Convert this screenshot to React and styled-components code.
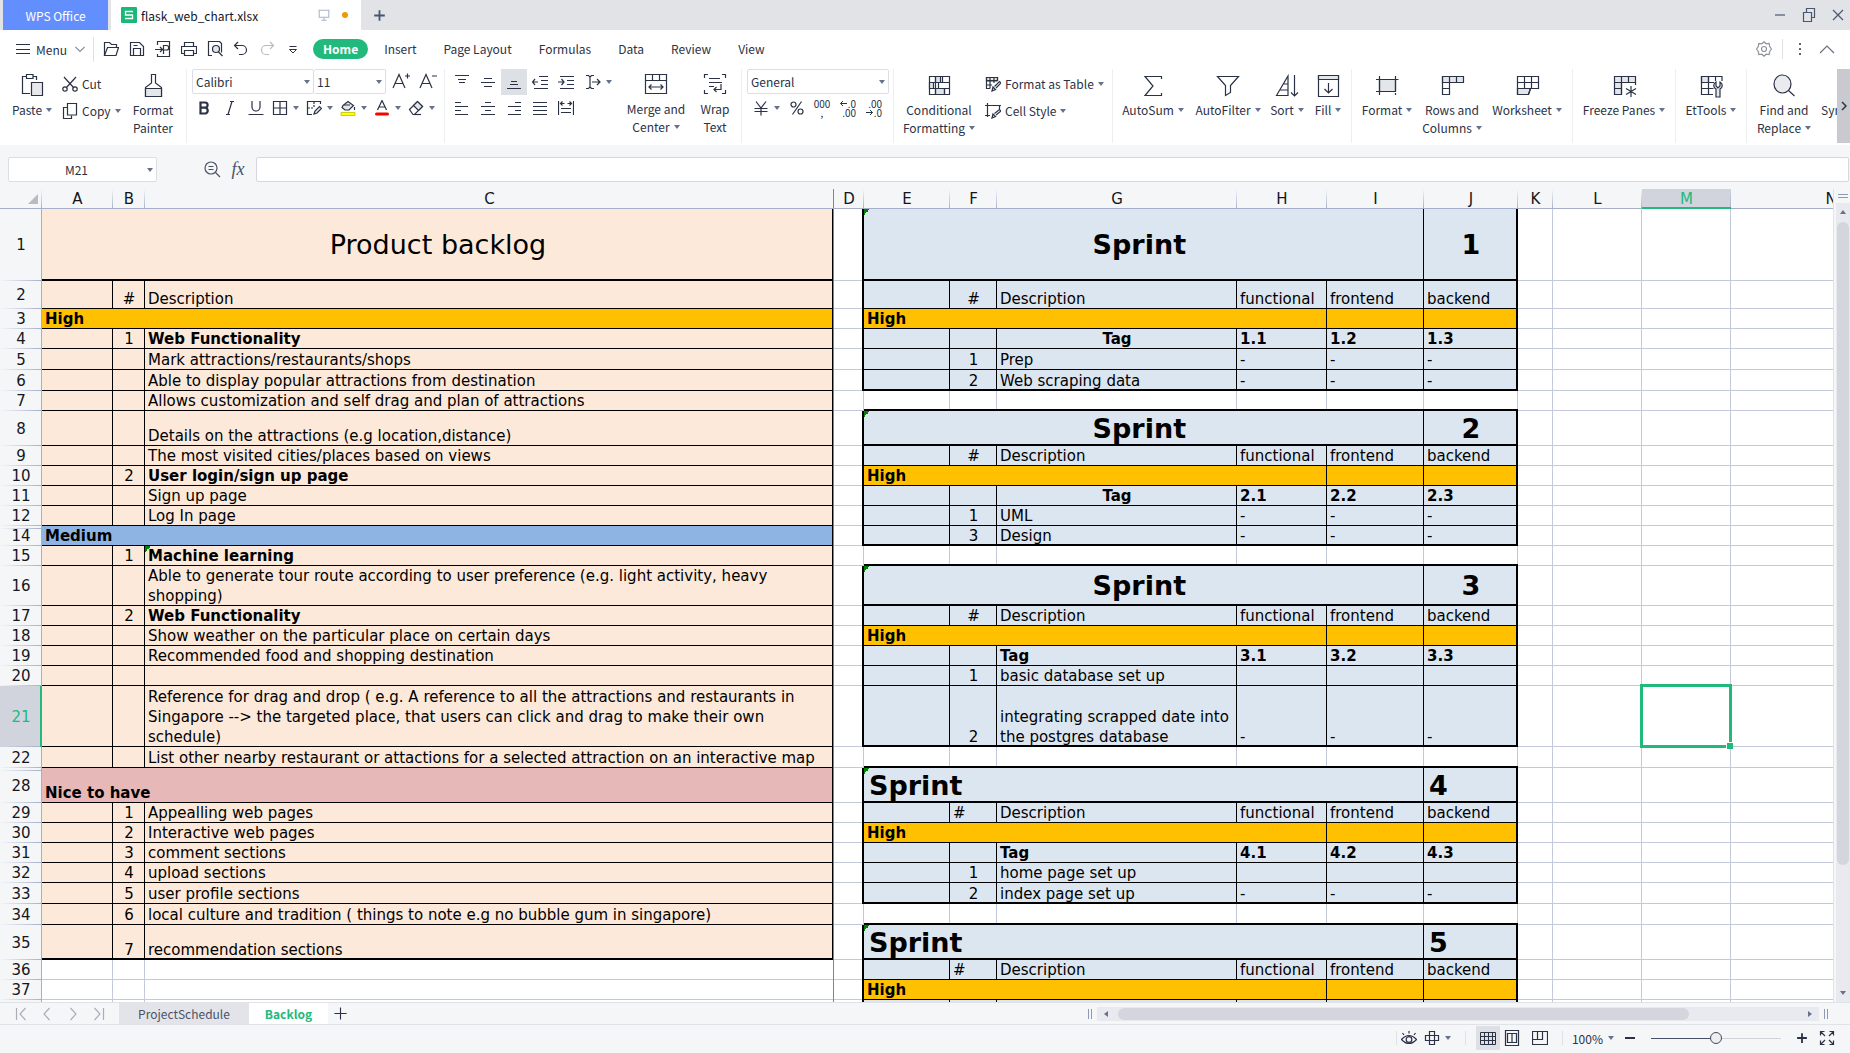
import React from 'react';
import styled, { createGlobalStyle, css } from 'styled-components';

const ui = '"Noto Sans CJK SC", "Noto Sans", sans-serif';
const sheet = '"DejaVu Sans", Verdana, sans-serif';
const ink = '#2b3245';
const green = '#21ba7c';
const gridLine = '#c3c9da';
const headLine = '#a5afc9';
const chrome = '#f5f6f8';
const peach = '#fce9da';
const ice = '#dce6f0';
const amber = '#ffc000';

const GlobalStyle = createGlobalStyle`
  * { box-sizing: border-box; }
  body { margin: 0; background: ${chrome}; font-family: ${ui}; font-size: 12px; color: ${ink}; }
  button, input, select { font: inherit; color: inherit; margin: 0; padding: 0; border: 0; background: none; }
  a { color: inherit; text-decoration: none; }
`;

const Shell = styled.div`
  display: flex;
  flex-direction: column;
  height: 100vh;
  overflow: hidden;
`;

/* ---------- drawing helpers ---------- */

const Svg = styled.svg`
  display: block;
  flex: none;
  fill: none;
  stroke: ${(p) => p.$color || ink};
  stroke-width: ${(p) => p.$weight || 1.2};
`;

const paths = {
  paste: <><path d="M6 3.500H2.500v17H10M16.500 7V3.500H13M6.500 1.500h6.500v4H6.500z" /><path d="M11.500 9.500h11v13h-11z" fill="#e6e8ec" /></>,
  brush: <><path d="M10.500 1.500h4v8.500l6 4.500v9H4.500v-9l6-4.500z" fill="#fff" /><path d="M4.500 15.500h16v8h-16z" fill="#e3e6ea" /></>,
  cut: <><path d="M2 1l10 11M14 1L4 12" /><circle cx="3" cy="13" r="2.200" /><circle cx="13" cy="13" r="2.200" /></>,
  copy: <><path d="M5.500 4.500h-4v11h8v-3" /><path d="M5.500.500h9v11.500h-9z" /></>,
  folder: <><path d="M1.500 14.500v-13h5l2 2h5v3" /><path d="M1.500 14.500l3-8h11l-2.500 8z" /></>,
  save: <><path d="M1.500 1.500h9l4 4v9h-13z" /><path d="M4.500 14.500v-7h7v7M4.500 4.500h4" /></>,
  export: <><path d="M2.500 4V.500h12v15h-12V13M0 8.500h7M5 6l2.500 2.500L5 11M8.500 13V4.500h3a2 2 0 010 4.500h-3" /></>,
  print: <><path d="M3.500 5.500v-4h9v4M3.500 12.500h-3v-7h15v7h-3" /><path d="M3.500 9.500h9v5h-9z" /></>,
  preview: <><path d="M5 14.500H1.500v-14h11l2 2v9" /><circle cx="9" cy="8" r="3.500" fill="#e3e6ea" /><path d="M11.500 11l4 4" /></>,
  undo: <path d="M5 1L1.500 4.500 5 8M1.500 4.500h7.500a4.500 4.500 0 010 9H6" />,
  redo: <path d="M11 1l3.500 3.500L11 8M14.500 4.500H7a4.500 4.500 0 000 9h3" />,
  more: <path d="M4.500 5.500h7M4.500 8.500h7L8 12z" strokeWidth="1" />,
  borders: <path d="M1.500 1.500h13v13h-13zM8 1.500v13M1.500 8h13" />,
  pen: <><path d="M14.500 4V1.500h-13v13H6" /><path d="M8 2v6M2 8h6" strokeDasharray="2 1" /><path d="M8 14l1-3 4.500-4.500 2 2L11 13z" fill="#e3e6ea" /></>,
  fill: <><path d="M3 5.500L8 1.500l5.500 4-4.500 4.500H5L2 7.500z" fill="#e3e6ea" /><path d="M4 5h6M14.500 7v3" /><path d="M1 12.500h14v3H1z" fill="#ffff00" stroke="#c2c200" strokeWidth=".800" /></>,
  fontColor: <><path d="M3.500 10L8 .500l4.500 9.500M5 7h6" /><path d="M2.500 14h11" stroke="#ff0000" strokeWidth="3" strokeLinecap="round" /></>,
  eraser: <><path d="M1.500 9.500l8-8 5 5-8 8H5z" /><path d="M5.500 5.500l5 5 4-4-5-5z" fill="#e3e6ea" /><path d="M6 14.500h7" /></>,
  underline: <path d="M4 1v6a4 4 0 008 0V1M.500 14.500h15" />,
  italic: <path d="M8 1.500h4M4 14.500h4M10 1.500l-4 13" />,
  bold: <path d="M4.500 2.500H9a2.600 2.600 0 010 5.200H4.500zM4.500 7.700h5a3 3 0 010 5.800h-5z" strokeWidth="2.200" />,
  growFont: <path d="M1 16L7 2.500 13 16M3.200 11.500h7.600M13 4h5M15.500 1.500v5" />,
  shrinkFont: <path d="M1 16L7 2.500 13 16M3.200 11.500h7.600M13 4h5" />,
  alignTop: <path d="M1 1.500h14M4 5.500h8M5 8.500h6" />,
  alignMid: <path d="M4 4.500h8M1 8.500h14M4 12.500h8" />,
  alignBottom: <path d="M5 7.500h6M4 10.500h8M1 14.500h14" />,
  outdent: <path d="M7 2.500h9M9 6.500h7M9 10.500h7M2 14.500h14M0 8h6M3 5L.500 8 3 11" />,
  indent: <path d="M2 2.500h14M9 6.500h7M9 10.500h7M2 14.500h14M0 8h6M3.500 5L6 8l-2.500 3" />,
  direction: <path d="M1 1.500h2.500L5 3v10l-1.500 1.500H1M9 1.500H6.500L5 3M9 14.500H6.500L5 13M7 8h8M12 5l3 3-3 3" />,
  alignLeft: <path d="M1 2.500h6M1 6.500h13M1 10.500h6M1 14.500h13" />,
  alignCenter: <path d="M5 2.500h6M1 6.500h14M5 10.500h6M1 14.500h14" />,
  alignRight: <path d="M9 2.500h6M2 6.500h13M9 10.500h6M2 14.500h13" />,
  justify: <path d="M1 2.500h14M1 6.500h14M1 10.500h14M1 14.500h14" />,
  distribute: <path d="M.500 1v14M15.500 1v14M3 3.500h3.500M9.500 3.500H13M4.500 1.500l-2 2 2 2M11.500 1.500l2 2-2 2M3 8.500h10M3 12.500h10" />,
  merge: <><path d="M1.500 2.500h21v19h-21zM1.500 8.500h21M8.500 2.500v6M15.500 2.500v6" /><path d="M4.500 15h15M7.500 12.500L5 15l2.500 2.500M16.500 12.500L19 15l-2.500 2.500" /></>,
  wrap: <><path d="M5 2.500H1.500V6M19 2.500h3.500V6M5 21.500H1.500V18M19 21.500h3.500V18" /><path d="M6 6.500h11M6 10.500h13M6 14.500h5M18 12v5.500h-7M13.500 15L11 17.500l2.500 2.500" /></>,
  yen: <path d="M3 1.500l5 6.500 5-6.500M1.500 8.500h13M1.500 11.500h13M8 8v7.500" />,
  percent: <><circle cx="4.500" cy="4.500" r="2.500" /><circle cx="11.500" cy="11.500" r="2.500" /><path d="M12.500 1.500l-9 13" /></>,
  conditional: <><path d="M2.500 3.500h20v18h-20z" /><path d="M8.500 3.500h5v6h-5zM2.500 15.500h4v-6h-4zM8.500 15.500h9v6h-9z" fill="#dfe2e7" /><path d="M2.500 9.500h20M2.500 15.500h20M8.500 3.500v18M15.500 3.500v6M17.500 15.500v6M11.500 9.500v6" /></>,
  tableFormat: <><path d="M1.500 1.500h11v3h-11z" fill="#e3e6ea" /><path d="M12.500 5V1.500h-11v11H5M1.500 5h11M1.500 9H7M5 1.500v11M9 1.500V7" /><path d="M7 15l1-4 2.500 2.500zM9.500 10.500l5-5 1.500 1.500-5 5" fill="#fff" /></>,
  cellStyle: <><path d="M0 2.500h16M2.500 0v14M0 12.500h5M14.500 2.500V6" /><path d="M7 15l1-4 2.500 2.500zM9.500 10.500l5-4 1.500 1.500-5 4" fill="#fff" /></>,
  sum: <path d="M20.500 6V3.500H4l8 9.500-8 9.500h16.500V20" />,
  filter: <path d="M1.500 3.500h21l-8 9v7l-5 3v-10z" />,
  sort: <path d="M1.500 22.500L13 3v19.500zM5 17h8M8.500 11H13M19.500 2v21M16 19.500l3.500 3.500 3.500-3.500" />,
  fillDown: <><path d="M2.500 2.500h20v21h-20z" /><path d="M2.500 2.500h20v4h-20z" fill="#e3e6ea" /><path d="M12.500 10v10M8.500 16l4 4 4-4" /></>,
  format: <><path d="M4.500 6.500h16v12h-16z" fill="#e3e6ea" /><path d="M4.500 3v19M20.500 3v15M1 6.500h22.500M1 18.500h16M20.500 20v2" /></>,
  rowsCols: <><path d="M2.500 3.500h21v6h-21z" fill="#e3e6ea" /><path d="M9.500 3.500v18h-7v-18M2.500 9.500h7M2.500 15.500h7M16.500 3.500v6" /></>,
  worksheet: <><path d="M2.500 15.500h13l-2 6h-11z" fill="#e3e6ea" /><path d="M2.500 3.500h21v12h-21zM2.500 9.500h21M9.500 3.500v12M16.500 3.500v12M2.500 15.500v6h11l2-6" /></>,
  freeze: <><path d="M2.500 3.500h21v6h-14v12h-7z" fill="#e3e6ea" /><path d="M9.500 3.500v18M16.500 3.500v6M2.500 9.500h21M2.500 15.500h7M23.500 9.500V12" /><path d="M19 13v11M14 15.500l10 6M24 15.500l-10 6" /></>,
  tools: <><path d="M2.500 3.500h7v6h-7z" fill="#e3e6ea" /><path d="M23 8V3.500H2.500v18H14M9.500 3.500v18M16.500 3.500V8M2.500 9.500H15M2.500 15.500h12" /><path d="M17 9v4l2 2 2-2V9c3 1.500 3 5.500 0 7v8h-4v-8c-3-1.500-3-5.500 0-7z" fill="#e3e6ea" /></>,
  find: <><ellipse cx="10.500" cy="11" rx="8.500" ry="9" fill="#e9ebee" /><path d="M16.500 17.500l6 5.500" /></>,
  magnifier: <><circle cx="7" cy="7" r="6" /><path d="M4.500 5.500h5M4.500 8.500h5M11.500 11.500l4.500 4.500" /></>,
  gear: <><path d="M8 .800l2.200 2 2.900-.300.600 3 1.800 2.500-1.800 2.500-.600 3-2.900-.300-2.200 2-2.200-2-2.900.300-.600-3L.500 8l1.800-2.500.600-3 2.900.300z" /><circle cx="8" cy="8" r="2.500" /></>,
  dots: <g fill="#5d6474" stroke="none"><path d="M7 2h2v2H7zM7 7h2v2H7zM7 12h2v2H7z" /></g>,
  chevronUp: <path d="M1 12l7-7 7 7" />,
  chevronDown: <path d="M3.500 6L8 10.500 12.500 6" />,
  burger: <path d="M1 3.500h14M1 8.500h14M1 12.500h14" />,
  minimize: <path d="M3 8h10" />,
  restore: <path d="M2.500 5.500h8v9h-8zM5.500 5V1.500h8v9H11" />,
  close: <path d="M3 3l10 10M13 3L3 13" />,
  monitor: <path d="M2.500 2.500h11v8h-11zM8 10.500v3M5 14h6" />,
  plus: <path d="M1.500 8h13M8 1.500v13" />,
  minus: <path d="M3 8h10" />,
  first: <path d="M3.500 2v12M12.500 2L7 8l5.500 6" />,
  prev: <path d="M10.500 2L5 8l5.500 6" />,
  next: <path d="M5.500 2L11 8l-5.500 6" />,
  last: <path d="M3.500 2L9 8l-5.500 6M12.500 2v12" />,
  eye: <><path d="M.500 9.500Q8 1.500 15.500 9.500 8 17.500.500 9.500z" /><circle cx="8" cy="9.500" r="2.800" /><path d="M8 3.500V1M3 5L1.500 3M13 5l1.500-2" /></>,
  cross: <path d="M5.500 1.500h5v13h-5zM1.500 5.500h13v5h-13z" />,
  gridView: <path d="M.500 2.500h15v12H.500zM.500 6.500h15M.500 10.500h15M4.500 2.500v12M8.500 2.500v12M12.500 2.500v12" />,
  pageView: <path d="M1.500.500h13v15h-13zM3.500 3.500h9v9h-9zM8 3.500v9" />,
  layoutView: <path d="M.500 1.500h15v13H.500zM.500 9.500h10v-8M5.500 1.500v8" />,
  full: <path d="M10 6l4.500-4.500M10.500 1.500h4v4M6 6L1.500 1.500M5.500 1.500h-4v4M10 10l4.500 4.500M10.500 14.500h4v-4M6 10l-4.500 4.500M5.500 14.500h-4v-4" />,
};

const Icon = ({ name, size = 16, box, color, weight }) => (
  <Svg width={size} height={size} viewBox={`0 0 ${box || size} ${box || size}`} $color={color} $weight={weight} aria-hidden="true">
    {paths[name]}
  </Svg>
);

const SmallSvg = styled.svg`
  display: inline-block;
  flex: none;
  fill: #66718c;
  vertical-align: middle;
`;
const Caret = () => (
  <SmallSvg width="6" height="4" viewBox="0 0 6 4" aria-hidden="true"><path d="M0 0h6L3 4z" /></SmallSvg>
);
const ArrowIcon = ({ d, w, h }) => (
  <SmallSvg width={w} height={h} viewBox={`0 0 ${w} ${h}`} aria-hidden="true"><path d={d} /></SmallSvg>
);

/* ---------- title bar ---------- */

const TitleBar = styled.header`
  display: flex;
  align-items: center;
  flex: none;
  height: 30px;
  padding-left: 3px;
  background: #e2e3e7;
`;
const OfficeTab = styled.button`
  width: 105px;
  height: 30px;
  background: #628ffd;
  color: #fff;
`;
const FileTab = styled.div`
  display: flex;
  align-items: center;
  width: 250px;
  height: 30px;
  margin: 0 10px 0 3px;
  padding: 0 13px 0 10px;
  gap: 4px;
  background: #fff;
  color: #14161c;
`;
const FileMark = styled.span`
  display: grid;
  place-items: center;
  width: 16px;
  height: 16px;
  border-radius: 1px;
  background: #19b879;
`;
const FileName = styled.span`
  flex: 1;
`;
const Unsaved = styled.span`
  width: 6px;
  height: 6px;
  margin-left: 7px;
  border-radius: 50%;
  background: #ec9a00;
`;
const IconButton = styled.button`
  display: inline-flex;
  align-items: center;
  justify-content: center;
  flex: none;
  gap: ${(p) => p.$gap || 0}px;
  width: ${(p) => p.$w || 26}px;
  height: ${(p) => p.$h || 26}px;
  background: ${(p) => (p.$on ? '#dde1e6' : 'transparent')};
`;
const Push = styled.span`
  flex: 1;
`;
const WindowButtons = styled.div`
  display: flex;
  gap: 5px;
`;

/* ---------- menu bar ---------- */

const MenuBar = styled.nav`
  display: flex;
  align-items: center;
  flex: none;
  height: 39px;
  padding: 0 6px 1px 15px;
  background: #fff;
`;
const MenuButton = styled.button`
  display: flex;
  align-items: center;
  gap: 5px;
  width: 78px;
  height: 26px;
  white-space: nowrap;
`;
const Divider = styled.span`
  flex: none;
  width: 1px;
  height: ${(p) => p.$h || 20}px;
  margin: 0 ${(p) => p.$m || 0}px;
  background: #dfe1e6;
`;
const QuickTools = styled.div`
  display: flex;
  margin: 0 7px 0 4px;
`;
const Tabs = styled.div`
  display: flex;
  align-items: center;
  gap: 5px;
`;
const TabLink = styled.a`
  padding: 0 ${(p) => (p.$on ? 10 : 11)}px;
  border-radius: 10px;
  line-height: 20px;
  background: ${(p) => (p.$on ? green : 'transparent')};
  color: ${(p) => (p.$on ? '#fff' : ink)};
  font-weight: ${(p) => (p.$on ? 700 : 400)};
`;

/* ---------- ribbon ---------- */

const Ribbon = styled.div`
  display: flex;
  flex: none;
  height: 76px;
  overflow: hidden;
  background: #fff;
`;
const RibbonBody = styled.div`
  display: flex;
  flex: 1;
  min-width: 0;
  overflow: hidden;
`;
const Group = styled.section`
  display: flex;
  flex: none;
  width: ${(p) => p.$w}px;
  height: 74px;
  padding-left: ${(p) => p.$pad || 0}px;
  border-right: 1px solid #eceef1;
`;
const Big = styled.button`
  display: flex;
  flex-direction: column;
  align-items: center;
  flex: none;
  width: ${(p) => p.$w}px;
  padding-top: ${(p) => (p.$high ? 3 : 4)}px;
  gap: 3px;
  line-height: 18px;
  white-space: nowrap;
`;
const Label = styled.span`
  display: inline-flex;
  align-items: center;
  gap: 4px;
`;
const Stack = styled.div`
  display: flex;
  flex-direction: column;
  flex: none;
  gap: 1px;
  width: ${(p) => p.$w}px;
`;
const Pair = styled.div`
  display: flex;
  flex-direction: column;
  align-items: flex-start;
  flex: none;
  width: ${(p) => p.$w}px;
  padding-left: 6px;
`;
const Small = styled.button`
  display: flex;
  align-items: center;
  gap: 4px;
  height: 27px;
  padding-top: 2px;
  line-height: 18px;
  white-space: nowrap;
`;
const Line = styled.div`
  display: flex;
  align-items: center;
  height: 25px;
`;
const PickBox = styled.span`
  position: relative;
  display: flex;
  flex: none;
  width: ${(p) => p.$w}px;
  height: 25px;
  border: 1px solid #dcdee4;
  border-left-width: ${(p) => (p.$joined ? 0 : 1)}px;
  border-radius: 2px;
  background: #fff;

  select, input {
    width: 100%;
    padding-left: 3px;
    appearance: none;
    outline: none;
  }
  svg {
    position: absolute;
    right: 3px;
    top: 10px;
    pointer-events: none;
  }
`;
const NameBox = styled(PickBox)`
  input {
    padding-right: 15px;
    text-align: center;
  }
`;
const Digits = styled.span`
  display: flex;
  flex-direction: column;
  align-items: ${(p) => p.$side || 'center'};
  font-size: 10px;
  line-height: 9px;
`;
const DigitLine = styled.span`
  display: flex;
  align-items: center;
  gap: 1px;
`;
const SymbolButton = styled.button`
  align-self: flex-start;
  padding: 32px 0 0 5px;
  line-height: 18px;
`;
const RibbonMore = styled.button`
  display: grid;
  place-items: center;
  flex: none;
  width: 13px;
  height: 74px;
  background: #c9cacf;
`;

/* ---------- formula bar ---------- */

const FormulaBar = styled.div`
  display: flex;
  align-items: center;
  flex: none;
  height: 44px;
  padding: 5px 1px 0 8px;
`;
const FormulaTools = styled.div`
  display: flex;
  width: 99px;
  padding: 0 5px 0 42px;
`;
const FormulaField = styled.div`
  display: flex;
  flex: 1;
  height: 25px;
  border: 1px solid #d5d7de;
  border-radius: 2px;
  background: #fff;

  input {
    flex: 1;
    padding: 0 4px;
    outline: none;
  }
`;
const Fx = styled.span`
  font-family: "Liberation Serif", serif;
  font-style: italic;
  font-size: 18px;
  color: #4a5268;
`;

/* ---------- sheet ---------- */

const Work = styled.main`
  display: flex;
  flex: 1;
  min-height: 0;
`;
const SheetView = styled.div`
  flex: 1;
  min-width: 0;
  overflow: hidden;
  background: #fff;
`;
const Table = styled.table`
  width: max-content;
  table-layout: fixed;
  border-spacing: 0;
  font-family: ${sheet};
  font-size: 15px;
  line-height: 20px;
  color: #000;
`;
const ColHead = styled.th`
  height: 20px;
  padding: 0;
  font-weight: 400;
  color: ${(p) => (p.$on ? green : '#14161c')};
  background-color: ${(p) => (p.$on ? '#d1d4dc' : chrome)};
  background-image: linear-gradient(to bottom, transparent, ${(p) => (p.$freeze ? green : headLine)} ${(p) => (p.$freeze ? '0' : '100%')});
  background-size: 1px 100%;
  background-position: right top;
  background-repeat: no-repeat;
  box-shadow: inset 0 ${(p) => (p.$on ? '-2px' : '-1px')} 0 ${(p) => (p.$on ? green : headLine)};
`;
const Corner = styled(ColHead)`
  svg { display: block; margin: 0 4px 0 auto; }
`;
const RowHead = styled.th`
  padding: 0;
  font-weight: 400;
  vertical-align: middle;
  color: ${(p) => (p.$on ? green : '#14161c')};
  background-color: ${(p) => (p.$on ? '#d1d4dc' : chrome)};
  background-image: linear-gradient(to right, transparent, ${headLine}), linear-gradient(to right, transparent, ${(p) => (p.$skip ? headLine : 'transparent')});
  background-size: 100% 1px;
  background-position: left bottom, left 2px;
  background-repeat: no-repeat;
  box-shadow: inset ${(p) => (p.$on ? '-2px' : '-1px')} 0 0 ${(p) => (p.$on ? green : headLine)};
`;

const edge = {
  right: {
    g: `inset -1px 0 0 ${gridLine}`,
    k: 'inset -1px 0 0 #000',
    K: 'inset -2px 0 0 #000',
    f: 'inset -1px 0 0 #21ba7c',
    c: 'inset -1px 0 0 #21ba7c, inset -2px 0 0 #000',
  },
  bottom: {
    g: `inset 0 -1px 0 ${gridLine}`,
    k: 'inset 0 -1px 0 #000',
    K: 'inset 0 -2px 0 #000',
  },
};
const Cell = styled.td`
  position: relative;
  padding: 0 3px;
  vertical-align: bottom;
  text-align: ${(p) => p.$align || 'left'};
  font-weight: ${(p) => (p.$bold ? 700 : 400)};
  background-color: ${(p) => p.$bg || '#fff'};
  box-shadow: ${(p) =>
    p.$b && p.$b !== 'g' && !'cf'.includes(p.$r || 'g')
      ? `${edge.bottom[p.$b]}, ${edge.right[p.$r || 'g']}`
      : `${edge.right[p.$r || 'g']}, ${edge.bottom[p.$b || 'g']}`};
  ${(p) =>
    p.$title &&
    css`
      padding: 0 5px;
      vertical-align: middle;
      font-size: 27px;
      line-height: 32px;
    `}
  ${(p) =>
    p.$note &&
    css`
      background-image: linear-gradient(135deg, #008000 50%, transparent 50%);
      background-size: 6px 6px;
      background-repeat: no-repeat;
    `}
`;
const Selection = styled.span`
  position: absolute;
  z-index: 1;
  inset: -2px -1px -1px -2px;
  border: 3px solid ${green};

  &::after {
    content: '';
    position: absolute;
    right: -4px;
    bottom: -4px;
    width: 6px;
    height: 6px;
    border: solid #fff;
    border-width: 1px 0 0 1px;
    background: ${green};
  }
`;

const columns = [
  ['A', 71], ['B', 32], ['C', 689], ['D', 30], ['E', 86], ['F', 47], ['G', 240],
  ['H', 90], ['I', 97], ['J', 94], ['K', 35], ['L', 89], ['M', 89], ['N', 200],
];

const item = (num, text, bold, note) => ({ kind: 'item', num, text, bold, note });
const band = (text, color) => ({ kind: 'band', text, color });
const sprint = (n, align) => ({ kind: 'title', n, align });
const head = (align) => ({ kind: 'head', align });
const high = { kind: 'band' };
const tag = (n, align) => ({ kind: 'row', g: 'Tag', bold: true, align, marks: [`${n}.1`, `${n}.2`, `${n}.3`] });
const task = (f, g, last, blank) => ({ kind: 'row', f, g, last, marks: blank ? ['', '', ''] : ['-', '-', '-'] });
const gap = { kind: 'gap' };

const rows = [
  [1, 72, { kind: 'title', text: 'Product backlog' }, sprint('1', 'center')],
  [2, 28, item('#', 'Description'), head('center')],
  [3, 20, band('High', amber), high],
  [4, 20, item('1', 'Web Functionality', true), tag(1, 'center')],
  [5, 21, item('', 'Mark attractions/restaurants/shops'), task('1', 'Prep')],
  [6, 21, item('', 'Able to display popular attractions from destination'), task('2', 'Web scraping data', true)],
  [7, 20, item('', 'Allows customization and self drag and plan of attractions'), gap],
  [8, 35, item('', 'Details on the attractions (e.g location,distance)'), sprint('2', 'center')],
  [9, 20, item('', 'The most visited cities/places based on views'), head('center')],
  [10, 20, item('2', 'User login/sign up page', true), high],
  [11, 20, item('', 'Sign up page'), tag(2, 'center')],
  [12, 20, item('', 'Log In page'), task('1', 'UML')],
  [14, 20, band('Medium', '#8db4e3'), task('3', 'Design', true), true],
  [15, 20, item('1', 'Machine learning', true, true), gap],
  [16, 40, item('', 'Able to generate tour route according to user preference (e.g. light activity, heavy shopping)'), sprint('3', 'center')],
  [17, 20, item('2', 'Web Functionality', true), head('center')],
  [18, 20, item('', 'Show weather on the particular place on certain days'), high],
  [19, 20, item('', 'Recommended food and shopping destination'), tag(3)],
  [20, 20, item('', ''), task('1', 'basic database set up', false, true)],
  [21, 61, item('', 'Reference for drag and drop ( e.g. A reference to all the attractions and restaurants in Singapore --> the targeted place, that users can click and drag to make their own schedule)'), task('2', 'integrating scrapped date into the postgres database', true)],
  [22, 21, item('', 'List other nearby restaurant or attactions for a selected attraction on an interactive map'), gap],
  [28, 35, band('Nice to have', '#e6b8b7'), sprint('4'), true],
  [29, 20, item('1', 'Appealling web pages'), head()],
  [30, 20, item('2', 'Interactive web pages'), high],
  [31, 20, item('3', 'comment sections'), tag(4)],
  [32, 20, item('4', 'upload sections'), task('1', 'home page set up', false, true)],
  [33, 21, item('5', 'user profile sections'), task('2', 'index page set up', true)],
  [34, 21, item('6', 'local culture and tradition ( things to note e.g no bubble gum in singapore)'), gap],
  [35, 35, { ...item('7', 'recommendation sections'), last: true }, sprint('5')],
  [36, 20, null, head()],
  [37, 20, null, high],
  ['', 20, null, task('', '', false, true)],
];

function LeftCells({ d }) {
  if (!d) return <><Cell /><Cell /><Cell $r="f" /></>;
  if (d.kind === 'title') return <Cell colSpan={3} $title $align="center" $bg={peach} $r="c" $b="K">{d.text}</Cell>;
  if (d.kind === 'band') return <Cell colSpan={3} $bold $bg={d.color} $r="c" $b="k">{d.text}</Cell>;
  const b = d.last ? 'K' : 'k';
  return (
    <>
      <Cell $bg={peach} $r="k" $b={b} />
      <Cell $bg={peach} $r="k" $b={b} $align="center">{d.num}</Cell>
      <Cell $bg={peach} $r="c" $b={b} $bold={d.bold} $note={d.note}>{d.text}</Cell>
    </>
  );
}

function RightCells({ d }) {
  if (d.kind === 'gap') return [0, 1, 2, 3, 4, 5].map((i) => <Cell key={i} $b="K" />);
  if (d.kind === 'title') {
    return (
      <>
        <Cell colSpan={5} $title $bold $note $align={d.align} $bg={ice} $r="k" $b="K">{'Sprint\u00a0'}</Cell>
        <Cell $title $bold $align={d.align} $bg={ice} $r="K" $b="K">{d.n}</Cell>
      </>
    );
  }
  if (d.kind === 'band') {
    return (
      <>
        <Cell colSpan={4} $bold $bg={amber} $r="k" $b="k">High</Cell>
        <Cell $bg={amber} $r="k" $b="k" />
        <Cell $bg={amber} $r="K" $b="k" />
      </>
    );
  }
  const isHead = d.kind === 'head';
  const b = d.last ? 'K' : 'k';
  const marks = isHead ? ['functional', 'frontend', 'backend'] : d.marks;
  return (
    <>
      <Cell $bg={ice} $r="k" $b={b} />
      <Cell $bg={ice} $r="k" $b={b} $align={isHead ? d.align : 'center'}>{isHead ? '#' : d.f}</Cell>
      <Cell $bg={ice} $r="k" $b={b} $bold={d.bold} $align={isHead ? 'left' : d.align}>{isHead ? 'Description' : d.g}</Cell>
      <Cell $bg={ice} $r="k" $b={b} $bold={d.bold}>{marks[0]}</Cell>
      <Cell $bg={ice} $r="k" $b={b} $bold={d.bold}>{marks[1]}</Cell>
      <Cell $bg={ice} $r="K" $b={b} $bold={d.bold}>{marks[2]}</Cell>
    </>
  );
}

function Sheet() {
  return (
    <Table>
      <colgroup>
        <col width={42} />
        {columns.map(([name, w]) => <col key={name} width={w} />)}
      </colgroup>
      <thead>
        <tr>
          <Corner scope="col" aria-label="Select all">
            <svg width="10" height="10" viewBox="0 0 10 10" aria-hidden="true"><path d="M10 0v10H0z" fill="#b9bbc0" /></svg>
          </Corner>
          {columns.map(([name]) => (
            <ColHead key={name} scope="col" $on={name === 'M'} $freeze={name === 'C'}>{name}</ColHead>
          ))}
        </tr>
      </thead>
      <tbody>
        {rows.map(([n, h, left, right, skip], i) => (
          <tr key={i} height={h}>
            <RowHead scope="row" $on={n === 21} $skip={skip}>{n}</RowHead>
            <LeftCells d={left} />
            <Cell $r={right.kind === 'gap' ? 'g' : 'K'} />
            <RightCells d={right} />
            <Cell />
            <Cell />
            <Cell>{n === 21 && <Selection />}</Cell>
            <Cell />
          </tr>
        ))}
      </tbody>
    </Table>
  );
}

/* ---------- scroll bars, sheet tabs, status bar ---------- */

const VScroll = styled.div`
  display: flex;
  flex-direction: column;
  align-items: center;
  flex: none;
  width: 17px;
  border-left: 1px solid #e0e2ea;
  padding: 5px 0 0 2px;
`;
const VTrack = styled.div`
  display: flex;
  flex-direction: column;
  align-items: center;
  flex: 1;
  width: 14px;
  margin-top: 5px;
  padding: 7px 0;
  gap: 8px;
  background: #e9eaf0;
`;
const VThumb = styled.div`
  flex: 0 1 643px;
  width: 12px;
  border-radius: 6px;
  background: #d4d6de;
`;
const SheetBar = styled.div`
  display: flex;
  align-items: center;
  flex: none;
  height: 23px;
  padding-left: 8px;
  border-top: 1px solid #e0e2e8;
  border-bottom: 1px solid #e0e2e8;
`;
const SheetNav = styled.div`
  display: flex;
  width: 111px;
`;
const SheetTab = styled.button`
  width: ${(p) => p.$w}px;
  height: 21px;
  line-height: 21px;
  background: ${(p) => (p.$on ? '#fff' : '#e3e4ea')};
  color: ${(p) => (p.$on ? green : '#4b5266')};
  font-weight: ${(p) => (p.$on ? 700 : 400)};
`;
const Grip = styled.span`
  flex: none;
  width: ${(p) => (p.$flat ? 10 : 4)}px;
  height: ${(p) => (p.$flat ? 4 : 10)}px;
  border: solid #8d99b5;
  border-width: ${(p) => (p.$flat ? '1px 0' : '0 1px')};
`;
const HTrack = styled.div`
  display: flex;
  align-items: center;
  justify-content: space-between;
  width: 722px;
  height: 14px;
  margin: 0 5px;
  padding: 0 7px;
  background: #e9eaf0;
`;
const HThumb = styled.div`
  width: 571px;
  height: 12px;
  margin: 0 auto 0 10px;
  border-radius: 6px;
  background: #d4d6de;
`;
const EndSpace = styled.span`
  width: 22px;
`;
const StatusBar = styled.footer`
  display: flex;
  align-items: center;
  justify-content: flex-end;
  flex: none;
  height: 28px;
  padding: 0 10px 2px 0;
`;
const ZoomLevel = styled.button`
  display: flex;
  align-items: center;
  gap: 5px;
  padding: 0 3px 0 2px;
`;
const ZoomSlider = styled.span`
  display: flex;
  width: 147px;
  padding: 0 9px 0 8px;

  input {
    width: 100%;
    height: 14px;
    appearance: none;
    outline: none;
  }
  input::-webkit-slider-runnable-track {
    height: 1px;
    background: linear-gradient(to right, #46506a 50%, #cfd2da 50%);
  }
  input::-webkit-slider-thumb {
    appearance: none;
    width: 12px;
    height: 12px;
    margin-top: -6px;
    border: 1px solid #444b5c;
    border-radius: 50%;
    background: #eceef1;
  }
`;

function Tool({ name, label, w, caret, on, h, color, weight, size, box }) {
  return (
    <IconButton type="button" aria-label={label} $w={w} $h={h} $on={on} $gap={caret ? 5 : 0}>
      <Icon name={name} color={color} weight={weight} size={size} box={box} />
      {caret && <Caret />}
    </IconButton>
  );
}

function BigButton({ icon, lines, w, caret, high: raised }) {
  return (
    <Big type="button" $w={w} $high={raised}>
      <Icon name={icon} size={25} box={25} />
      <span>
        {lines.map((line, i) => (
          <React.Fragment key={line}>
            {i > 0 && <br />}
            <Label>{line}{caret && i === lines.length - 1 && <Caret />}</Label>
          </React.Fragment>
        ))}
      </span>
    </Big>
  );
}

const LeftArrow = () => <Svg width="7" height="7" viewBox="0 0 7 7" $weight={1} aria-hidden="true"><path d="M.500 3.500H7M3 1L.500 3.500 3 6" /></Svg>;
const RightArrow = () => <Svg width="7" height="7" viewBox="0 0 7 7" $weight={1} aria-hidden="true"><path d="M0 3.500h6.500M4 1l2.500 2.500L4 6" /></Svg>;

const quick = [
  ['folder', 'Open'], ['save', 'Save'], ['export', 'Export to PDF'], ['print', 'Print'],
  ['preview', 'Print Preview'], ['undo', 'Undo'],
];
const tabNames = ['Home', 'Insert', 'Page Layout', 'Formulas', 'Data', 'Review', 'View'];

export default function App() {
  return (
    <Shell>
      <GlobalStyle />
      <TitleBar>
        <OfficeTab type="button">WPS Office</OfficeTab>
        <FileTab>
          <FileMark>
            <svg width="10" height="10" viewBox="0 0 10 10" fill="none" stroke="#fff" strokeWidth="1.300" aria-hidden="true">
              <path d="M9 1.500H1.500V5h7v3.500H1" />
            </svg>
          </FileMark>
          <FileName>flask_web_chart.xlsx</FileName>
          <Icon name="monitor" size={14} box={16} color="#a9b3cc" />
          <Unsaved />
        </FileTab>
        <Tool name="plus" label="New tab" w={16} size={13} box={16} color="#46546f" weight={2.2} />
        <Push />
        <WindowButtons>
          <Tool name="minimize" label="Minimize" w={24} color="#4a5772" />
          <Tool name="restore" label="Restore" w={24} color="#4a5772" />
          <Tool name="close" label="Close" w={24} color="#4a5772" />
        </WindowButtons>
      </TitleBar>

      <MenuBar>
        <MenuButton type="button">
          <Icon name="burger" />
          Menu
          <Icon name="chevronDown" color="#8b90a0" />
        </MenuButton>
        <Divider $h={25} />
        <QuickTools>
          {quick.map(([name, label]) => <Tool key={name} name={name} label={label} />)}
          <Tool name="redo" label="Redo" color="#b9bcc4" />
          <Tool name="more" label="Customize" />
        </QuickTools>
        <Tabs>
          {tabNames.map((name) => <TabLink key={name} href="#" $on={name === 'Home'}>{name}</TabLink>)}
        </Tabs>
        <Push />
        <Tool name="gear" label="Settings" w={22} color="#8c919c" />
        <Divider $m={7} />
        <Tool name="dots" label="More options" w={20} />
        <Tool name="chevronUp" label="Collapse ribbon" w={34} color="#6b7180" />
      </MenuBar>

      <Ribbon>
        <RibbonBody>
          <Group $w={187} $pad={8}>
            <BigButton icon="paste" lines={['Paste']} w={48} caret />
            <Pair $w={70}>
              <Small type="button"><Icon name="cut" />Cut</Small>
              <Small type="button"><Icon name="copy" />Copy<Caret /></Small>
            </Pair>
            <BigButton icon="brush" lines={['Format', 'Painter']} w={54} />
          </Group>

          <Group $w={258} $pad={5}>
            <Stack $w={248}>
              <Line>
                <PickBox $w={122}><select aria-label="Font"><option>Calibri</option></select><Caret /></PickBox>
                <PickBox $w={72} $joined><select aria-label="Font size"><option>11</option></select><Caret /></PickBox>
                <Tool name="growFont" label="Increase font size" w={30} size={19} />
                <Tool name="shrinkFont" label="Decrease font size" w={24} size={19} />
              </Line>
              <Line>
                <Tool name="bold" label="Bold" w={24} />
                <Tool name="italic" label="Italic" w={28} />
                <Tool name="underline" label="Underline" w={24} />
                <Tool name="borders" label="Borders" w={34} caret />
                <Tool name="pen" label="Draw borders" w={34} caret />
                <Tool name="fill" label="Fill color" w={34} caret />
                <Tool name="fontColor" label="Font color" w={34} caret />
                <Tool name="eraser" label="Clear" w={34} caret />
              </Line>
            </Stack>
          </Group>

          <Group $w={297} $pad={4}>
            <Stack $w={172}>
              <Line>
                <Tool name="alignTop" label="Align top" />
                <Tool name="alignMid" label="Align middle" />
                <Tool name="alignBottom" label="Align bottom" on />
                <Tool name="outdent" label="Decrease indent" />
                <Tool name="indent" label="Increase indent" />
                <Tool name="direction" label="Text direction" w={38} caret />
              </Line>
              <Line>
                <Tool name="alignLeft" label="Align left" />
                <Tool name="alignCenter" label="Center" />
                <Tool name="alignRight" label="Align right" />
                <Tool name="justify" label="Justify" />
                <Tool name="distribute" label="Distribute" />
              </Line>
            </Stack>
            <BigButton icon="merge" lines={['Merge and', 'Center']} w={70} caret high />
            <BigButton icon="wrap" lines={['Wrap', 'Text']} w={48} high />
          </Group>

          <Group $w={152} $pad={5}>
            <Stack $w={142}>
              <Line>
                <PickBox $w={142}><select aria-label="Number format"><option>General</option></select><Caret /></PickBox>
              </Line>
              <Line>
                <Tool name="yen" label="Currency" w={38} caret />
                <Tool name="percent" label="Percent" w={24} />
                <IconButton type="button" aria-label="Thousands separator" $w={26}>
                  <Digits><span>000</span><span>,</span></Digits>
                </IconButton>
                <IconButton type="button" aria-label="Increase decimal" $w={26}>
                  <Digits $side="flex-end"><DigitLine><LeftArrow />.0</DigitLine><span>.00</span></Digits>
                </IconButton>
                <IconButton type="button" aria-label="Decrease decimal" $w={26}>
                  <Digits $side="flex-end"><span>.00</span><DigitLine><RightArrow />.0</DigitLine></Digits>
                </IconButton>
              </Line>
            </Stack>
          </Group>

          <Group $w={219} $pad={5}>
            <BigButton icon="conditional" lines={['Conditional', 'Formatting']} w={80} caret />
            <Pair $w={130}>
              <Small type="button"><Icon name="tableFormat" />Format as Table<Caret /></Small>
              <Small type="button"><Icon name="cellStyle" />Cell Style<Caret /></Small>
            </Pair>
          </Group>

          <Group $w={239} $pad={2}>
            <BigButton icon="sum" lines={['AutoSum']} w={76} caret />
            <BigButton icon="filter" lines={['AutoFilter']} w={74} caret />
            <BigButton icon="sort" lines={['Sort']} w={44} caret />
            <BigButton icon="fillDown" lines={['Fill']} w={38} caret />
          </Group>

          <Group $w={221} $pad={5}>
            <BigButton icon="format" lines={['Format']} w={60} caret />
            <BigButton icon="rowsCols" lines={['Rows and', 'Columns']} w={70} caret />
            <BigButton icon="worksheet" lines={['Worksheet']} w={80} caret />
          </Group>
          <Group $w={103} $pad={5}><BigButton icon="freeze" lines={['Freeze Panes']} w={92} caret /></Group>
          <Group $w={71} $pad={5}><BigButton icon="tools" lines={['EtTools']} w={60} caret /></Group>
          <Group $w={140} $pad={5}>
            <BigButton icon="find" lines={['Find and', 'Replace']} w={64} caret />
            <SymbolButton type="button">Symbol</SymbolButton>
          </Group>
        </RibbonBody>
        <RibbonMore type="button" aria-label="Scroll ribbon">
          <svg width="6" height="10" viewBox="0 0 6 10" fill="none" stroke={ink} strokeWidth="1.500" aria-hidden="true"><path d="M1 1l4 4-4 4" /></svg>
        </RibbonMore>
      </Ribbon>

      <FormulaBar>
        <NameBox $w={149}><input aria-label="Name box" defaultValue="M21" /><Caret /></NameBox>
        <FormulaTools>
          <Tool name="magnifier" label="Find" color="#4a5268" size={17} />
          <IconButton type="button" aria-label="Insert function" $w={26}><Fx>fx</Fx></IconButton>
        </FormulaTools>
        <FormulaField><input aria-label="Formula" /></FormulaField>
      </FormulaBar>

      <Work>
        <SheetView><Sheet /></SheetView>
        <VScroll>
          <Grip $flat />
          <VTrack>
            <ArrowIcon w={6} h={4} d="M0 4h6L3 0z" />
            <VThumb />
            <Push />
            <ArrowIcon w={6} h={4} d="M0 0h6L3 4z" />
          </VTrack>
        </VScroll>
      </Work>

      <SheetBar>
        <SheetNav>
          {['first', 'prev', 'next', 'last'].map((n) => <Tool key={n} name={n} label={`${n} sheet`} color="#a9adb8" h={20} />)}
        </SheetNav>
        <SheetTab type="button" $w={130}>ProjectSchedule</SheetTab>
        <SheetTab type="button" $w={79} $on>Backlog</SheetTab>
        <Tool name="plus" label="Add sheet" w={24} h={20} size={15} box={16} />
        <Push />
        <Grip />
        <HTrack>
          <ArrowIcon w={4} h={6} d="M4 0v6L0 3z" />
          <HThumb />
          <ArrowIcon w={4} h={6} d="M0 0v6l4-3z" />
        </HTrack>
        <Grip />
        <EndSpace />
      </SheetBar>

      <StatusBar>
        <Divider $h={14} />
        <Tool name="eye" label="Eye protection" w={24} />
        <Tool name="cross" label="Reading layout" w={34} caret />
        <Divider $h={14} $m={10} />
        <Tool name="gridView" label="Normal view" w={24} h={24} on weight={1} />
        <Tool name="pageView" label="Page break view" w={25} />
        <Tool name="layoutView" label="Page layout view" w={30} />
        <Divider $h={14} $m={7} />
        <ZoomLevel type="button">100%<Caret /></ZoomLevel>
        <Tool name="minus" label="Zoom out" w={26} weight={2} />
        <ZoomSlider><input type="range" aria-label="Zoom" min="0" max="100" defaultValue="50" /></ZoomSlider>
        <Tool name="plus" label="Zoom in" w={24} size={12} box={16} weight={2.4} />
        <Tool name="full" label="Full screen" w={26} />
      </StatusBar>
    </Shell>
  );
}
